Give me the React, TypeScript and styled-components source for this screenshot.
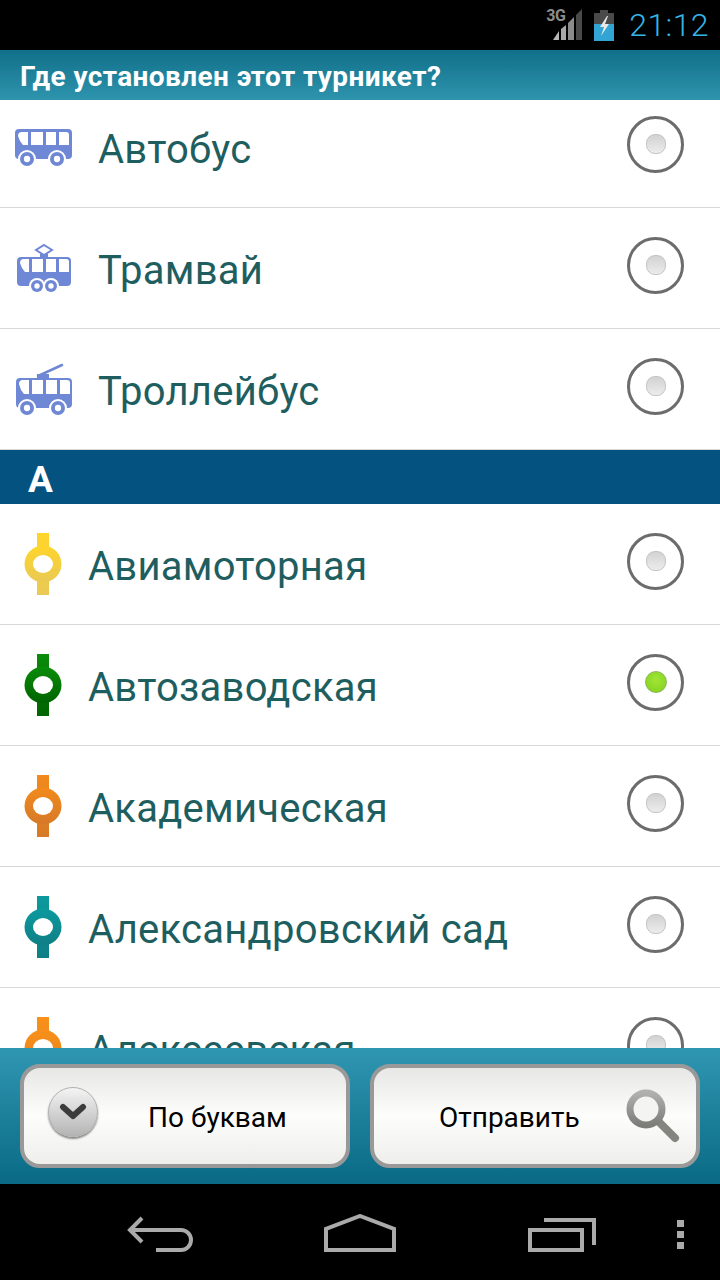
import React from "react";
import styled, { createGlobalStyle } from "styled-components";

const GlobalStyle = createGlobalStyle`
  html, body { margin: 0; padding: 0; background: #000; }
  * { box-sizing: border-box; }
`;

const Screen = styled.div`
  width: 720px;
  height: 1280px;
  display: flex;
  flex-direction: column;
  font-family: Roboto, "Liberation Sans", sans-serif;
  background: #fff;
  overflow: hidden;
`;

const StatusBar = styled.div`
  height: 50px;
  flex: none;
  background: #000;
  display: flex;
  align-items: center;
  justify-content: flex-end;
  padding-right: 11px;
`;

const SignalWrap = styled.div`
  position: relative;
  width: 38px;
  height: 32px;
  margin-right: 10px;
  margin-top: 0;
`;

const NetLabel = styled.span`
  position: absolute;
  left: 0;
  top: -1px;
  font-size: 16px;
  line-height: 16px;
  font-weight: 700;
  letter-spacing: -0.5px;
  color: #8c8c8c;
`;

const Clock = styled.span`
  font-size: 32px;
  line-height: 50px;
  font-weight: 300;
  letter-spacing: 0.4px;
  color: #33b5e5;
  margin-left: 15px;
`;

const TitleBar = styled.div`
  height: 50px;
  flex: none;
  background: linear-gradient(#116f8a, #2e94ad);
  color: #fff;
  font-size: 28px;
  font-weight: 700;
  letter-spacing: 0.4px;
  line-height: 54px;
  padding-left: 20px;
  white-space: nowrap;
`;

const List = styled.div`
  flex: 1;
  min-height: 0;
  overflow: hidden;
`;

const Inner = styled.div`
  margin-top: -13px;
`;

const Row = styled.div`
  height: 121px;
  display: flex;
  align-items: center;
  border-bottom: 1px solid #d8d8d8;
  position: relative;
`;

const VehicleIcon = styled.svg`
  width: 60px;
  height: 60px;
  margin-left: 14px;
  flex: none;
`;

const StationIcon = styled.svg`
  width: 40px;
  height: 64px;
  margin-left: 23px;
  flex: none;
  margin-top: -1px;
`;

const Label = styled.span<{ $indent: number }>`
  flex: 1;
  margin-left: ${(p) => p.$indent}px;
  margin-top: 5px;
  font-size: 40px;
  letter-spacing: 0.25px;
  line-height: 46px;
  color: #1f5e5f;
  white-space: nowrap;
`;

const Radio = styled.div`
  width: 57px;
  height: 57px;
  flex: none;
  margin-right: 36px;
  margin-bottom: 6px;
  border-radius: 50%;
  border: 3px solid #6c6c6c;
  background: #fff;
  display: flex;
  align-items: center;
  justify-content: center;
`;

const Dot = styled.div<{ $on: boolean }>`
  width: ${(p) => (p.$on ? 22 : 20)}px;
  height: ${(p) => (p.$on ? 22 : 20)}px;
  border-radius: ${(p) => (p.$on ? "50%" : "9px")};
  background: ${(p) =>
    p.$on ? "radial-gradient(circle at 50% 40%, #a2e636, #7fcf1c)" : "linear-gradient(#d2d2d2, #ececec)"};
  border: 1px solid ${(p) => (p.$on ? "#8fb85c" : "#c4c4c4")};
`;

const SectionHeader = styled.div`
  height: 54px;
  background: #04527f;
  color: #fff;
  font-size: 37px;
  font-weight: 700;
  line-height: 60px;
  padding-left: 28px;
`;

const BottomBar = styled.div`
  height: 136px;
  flex: none;
  background: linear-gradient(#2f96b1, #0a6a85);
  display: flex;
  gap: 20px;
  padding: 16px 20px;
`;

const Button = styled.div`
  flex: 1;
  height: 104px;
  border: 4px solid #999;
  border-radius: 20px;
  background: linear-gradient(#e7e8e5, #fdfdfc 50%, #eeeeeb);
  display: flex;
  align-items: center;
  color: #000;
  font-size: 28px;
`;

const ButtonText = styled.span<{ $indent: number }>`
  margin-left: ${(p) => p.$indent}px;
  margin-top: 3px;
`;

const ChevronCircle = styled.div`
  width: 50px;
  height: 50px;
  margin-left: 24px;
  margin-top: -8px;
  border-radius: 50%;
  background: linear-gradient(#f4f4f4, #b4b4b4);
  border: 1px solid #b0b0b0;
  box-shadow: 0 2px 2px rgba(0, 0, 0, 0.45);
  display: flex;
  align-items: center;
  justify-content: center;
`;

const SearchIcon = styled.svg`
  width: 54px;
  height: 54px;
  margin-left: 46px;
  flex: none;
`;

const NavBar = styled.div`
  height: 96px;
  flex: none;
  background: #000;
  display: flex;
  align-items: flex-start;
  gap: 131px;
  padding: 30px 0 0 127px;
`;

const NavIcon = styled.svg`
  flex: none;
  display: block;
`;

const MenuDots = styled.svg`
  flex: none;
  display: block;
  margin-left: -50px;
`;

const BLUE = "#6f88d6";

const Windows = ({ y, h, xs }: { y: number; h: number; xs: [number, number][] }) => (
  <>
    {xs.map(([a, b], i) => (
      <path
        key={a}
        d={
          i === 0
            ? `M${a} ${y + 4}q0-4 4-4h${b - a - 4}v${h}h-${b - a - 5}l-3-4z`
            : i === xs.length - 1
            ? `M${a} ${y}h${b - a - 3}q3 0 3 3v${h - 3}h-${b - a}z`
            : `M${a} ${y}h${b - a}v${h}h-${b - a}z`
        }
        fill="#fff"
      />
    ))}
  </>
);

const Wheel = ({ cx, cy, r }: { cx: number; cy: number; r: number }) => (
  <>
    <circle cx={cx} cy={cy} r={r + 2} fill="#fff" />
    <circle cx={cx} cy={cy} r={r} fill={BLUE} />
    <circle cx={cx} cy={cy} r={r * 0.45} fill="#fff" />
  </>
);

const Bus = () => (
  <VehicleIcon viewBox="0 0 60 60">
    <rect x="1" y="12" width="57" height="30" rx="4" fill={BLUE} />
    <Windows y={15} h={13} xs={[[4, 14], [17, 29], [32, 42], [45, 55]]} />
    <Wheel cx={13} cy={42} r={7} />
    <Wheel cx={43} cy={42} r={7} />
  </VehicleIcon>
);

const Tram = () => (
  <VehicleIcon viewBox="0 0 60 60">
    <path d="M30 7l8 5-8 5-8-5z" fill="none" stroke={BLUE} strokeWidth="2" />
    <rect x="26" y="16" width="8" height="4" fill={BLUE} />
    <rect x="3" y="19" width="54" height="29" rx="4" fill={BLUE} />
    <Windows y={21} h={13} xs={[[6, 15], [18, 29], [32, 42], [45, 55]]} />
    <Wheel cx={23} cy={48} r={6} />
    <Wheel cx={37} cy={48} r={6} />
  </VehicleIcon>
);

const Trolley = () => (
  <VehicleIcon viewBox="0 0 60 60">
    <path d="M24 17l24-11" stroke={BLUE} strokeWidth="2.5" fill="none" strokeLinecap="round" />
    <rect x="23" y="15" width="12" height="5" fill={BLUE} />
    <rect x="2" y="19" width="56" height="30" rx="4" fill={BLUE} />
    <Windows y={21} h={14} xs={[[5, 15], [18, 29], [32, 43], [46, 56]]} />
    <Wheel cx={13} cy={49} r={7} />
    <Wheel cx={44} cy={49} r={7} />
  </VehicleIcon>
);

const Station = ({ id, top, bottom }: { id: string; top: string; bottom: string }) => (
  <StationIcon viewBox="0 0 40 64">
    <defs>
      <linearGradient id={id} x1="0" y1="0" x2="0" y2="1">
        <stop offset="0" stopColor={top} />
        <stop offset="1" stopColor={bottom} />
      </linearGradient>
    </defs>
    <rect x="14" y="1" width="12" height="62" fill={`url(#${id})`} />
    <circle cx="20" cy="32" r="18.5" fill={`url(#${id})`} />
    <ellipse cx="20" cy="32" rx="10" ry="9" fill="#fff" />
  </StationIcon>
);

const vehicles = [
  { name: "Автобус", icon: <Bus /> },
  { name: "Трамвай", icon: <Tram /> },
  { name: "Троллейбус", icon: <Trolley /> },
];

const stations = [
  { name: "Авиамоторная", top: "#ffd52a", bottom: "#e9c955" },
  { name: "Автозаводская", top: "#0a8c0a", bottom: "#006400", selected: true },
  { name: "Академическая", top: "#f28a1c", bottom: "#d67a28" },
  { name: "Александровский сад", top: "#0b9a9e", bottom: "#0f7f86" },
  { name: "Алексеевская", top: "#f8901a", bottom: "#e8831c" },
];

export default function App() {
  return (
    <Screen>
      <GlobalStyle />
      <StatusBar>
        <SignalWrap>
          <svg width="38" height="32" viewBox="0 0 38 32">
            <path d="M36 0v31H30V6z" fill="#4a4a4a" />
            <path d="M28 8v23h-6V14z" fill="#8c8c8c" />
            <path d="M20 16v15h-5V20z" fill="#a8a8a8" />
            <path d="M13 22v9H7z" fill="#b8b8b8" />
          </svg>
          <NetLabel>3G</NetLabel>
        </SignalWrap>
        <svg width="20" height="31" viewBox="0 0 20 31">
          <path d="M6 0h8v3h6v28H0V3h6z" fill="#4a4a4a" />
          <rect x="0" y="14" width="20" height="17" fill="#33a5d5" />
          <path d="M13 6l-7 11h4l-3 9 8-12h-4l3-8z" fill="#e8e8e8" />
        </svg>
        <Clock>21:12</Clock>
      </StatusBar>
      <TitleBar>Где установлен этот турникет?</TitleBar>
      <List>
        <Inner>
          {vehicles.map((v) => (
            <Row key={v.name}>
              {v.icon}
              <Label $indent={24}>{v.name}</Label>
              <Radio>
                <Dot $on={false} />
              </Radio>
            </Row>
          ))}
          <SectionHeader>А</SectionHeader>
          {stations.map((s, i) => (
            <Row key={s.name}>
              <Station id={`st${i}`} top={s.top} bottom={s.bottom} />
              <Label $indent={25}>{s.name}</Label>
              <Radio>
                <Dot $on={!!s.selected} />
              </Radio>
            </Row>
          ))}
        </Inner>
      </List>
      <BottomBar>
        <Button>
          <ChevronCircle>
            <svg width="28" height="18" viewBox="0 0 28 18">
              <path d="M4 4l10 9 10-9" fill="none" stroke="#3c3c3c" strokeWidth="6" strokeLinecap="round" strokeLinejoin="round" />
            </svg>
          </ChevronCircle>
          <ButtonText $indent={50}>По буквам</ButtonText>
        </Button>
        <Button>
          <ButtonText $indent={65}>Отправить</ButtonText>
          <SearchIcon viewBox="0 0 54 54">
            <defs>
              <linearGradient id="lensRing" x1="0" y1="0" x2="0" y2="1">
                <stop offset="0" stopColor="#b0b0ae" />
                <stop offset="1" stopColor="#7c7c78" />
              </linearGradient>
            </defs>
            <path d="M33 33l16 16" stroke="#85857f" strokeWidth="8" strokeLinecap="round" />
            <circle cx="20" cy="20" r="16" fill="#f4f4f2" stroke="url(#lensRing)" strokeWidth="7" />
          </SearchIcon>
        </Button>
      </BottomBar>
      <NavBar>
        <NavIcon width="66" height="38" viewBox="0 0 66 38">
          <path d="M15 4L3 16l12 12M3 16H54a10 10 0 0 1 0 20H29" fill="none" stroke="#aaa" strokeWidth="4" />
        </NavIcon>
        <NavIcon width="72" height="38" viewBox="0 0 72 38">
          <path d="M2 36V15L36 2l34 13v21z" fill="none" stroke="#aaa" strokeWidth="4" />
        </NavIcon>
        <NavIcon width="69" height="38" viewBox="-1 0 69 38">
          <path d="M16 6h50v25" fill="none" stroke="#aaa" strokeWidth="4" />
          <rect x="2" y="16" width="52" height="20" fill="none" stroke="#aaa" strokeWidth="4" />
        </NavIcon>
        <MenuDots width="7" height="38" viewBox="0 0 7 38">
          <rect y="6" width="7" height="7" fill="#aaa" />
          <rect y="17" width="7" height="7" fill="#aaa" />
          <rect y="28" width="7" height="7" fill="#aaa" />
        </MenuDots>
      </NavBar>
    </Screen>
  );
}
